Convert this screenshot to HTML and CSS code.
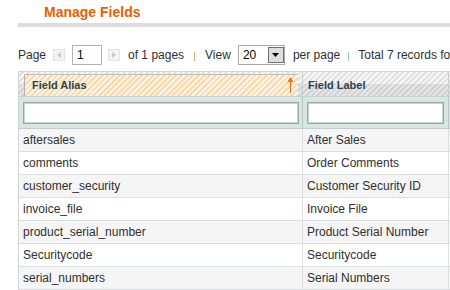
FILE: index.html
```html
<!DOCTYPE html>
<html lang="en">
<head>
    <meta charset="UTF-8">
    <meta name="viewport" content="width=device-width, initial-scale=1.0">
    <title>Manage Fields</title>
    <link rel="stylesheet" href="styles.css">
</head>
<body>
    <div class="content">
        <div class="content-header">
            <h3>Manage Fields</h3>
        </div>
        <div class="pager">
            <span class="txt">Page</span>
            <span class="pg-btn prev">
                <svg width="4" height="6" viewBox="0 0 4 6"><path d="M4 0 L0 3 L4 6 Z" fill="#c9c9c9"/></svg>
            </span>
            <input type="text" class="page-input" value="1">
            <span class="pg-btn next">
                <svg width="4" height="6" viewBox="0 0 4 6"><path d="M0 0 L4 3 L0 6 Z" fill="#c9c9c9"/></svg>
            </span>
            <span class="txt of">of 1 pages</span>
            <span class="sep sep-a"></span>
            <span class="txt view">View</span>
            <div class="select">
                <span class="val">20</span>
                <span class="drop">
                    <svg width="7" height="4" viewBox="0 0 7 4"><path d="M0 0 L7 0 L3.5 4 Z" fill="#000"/></svg>
                </span>
            </div>
            <span class="txt per">per page</span>
            <span class="sep sep-b"></span>
            <span class="txt total">Total 7 records found</span>
        </div>
        <table class="grid">
            <thead>
                <tr class="headings">
                    <th class="col-alias">
                        <span class="sort-asc">
                            <span>Field Alias</span>
                            <svg width="7" height="16" viewBox="0 0 7 16"><path d="M3.5 0 L6.5 5 L4 5 L4 16 L3 16 L3 5 L0.5 5 Z" fill="#f26c1d"/></svg>
                        </span>
                    </th>
                    <th class="col-label"><span class="plain">Field Label</span></th>
                    <th class="col-more"><span class="plain">&nbsp;</span></th>
                </tr>
                <tr class="filter">
                    <th><input type="text" class="filter-input alias-input"></th>
                    <th><input type="text" class="filter-input label-input"></th>
                    <th></th>
                </tr>
            </thead>
            <tbody>
                <tr><td>aftersales</td><td>After Sales</td><td></td></tr>
                <tr><td>comments</td><td>Order Comments</td><td></td></tr>
                <tr><td>customer_security</td><td>Customer Security ID</td><td></td></tr>
                <tr><td>invoice_file</td><td>Invoice File</td><td></td></tr>
                <tr><td>product_serial_number</td><td>Product Serial Number</td><td></td></tr>
                <tr><td>Securitycode</td><td>Securitycode</td><td></td></tr>
                <tr><td>serial_numbers</td><td>Serial Numbers</td><td></td></tr>
            </tbody>
        </table>
    </div>
</body>
</html>
```

FILE: styles.css
```css
body {
    margin: 0;
    padding: 0;
    font-family: "Liberation Sans", Arial, sans-serif;
    font-size: 12px;
    color: #2f2f2f;
    background: #fff;
    overflow: hidden;
}
.content {
    width: 700px;
    padding-left: 18px;
}
.content-header {
    padding: 3px 0 2px 26px;
    border-bottom: 4px solid #dcdcdc;
}
.content-header h3 {
    margin: 0;
    font-size: 14px;
    line-height: 18px;
    font-weight: bold;
    color: #eb5e00;
}
.pager {
    display: flex;
    align-items: center;
    height: 20px;
    margin-top: 18px;
    white-space: nowrap;
}
.pager .txt {
    line-height: 14px;
    padding-bottom: 1px;
}
.pg-btn {
    display: flex;
    align-items: center;
    justify-content: center;
    width: 12px;
    height: 12px;
    box-sizing: border-box;
    background-color: #f3f3f3;
    border: 1px solid #e2e2e2;
}
.prev {
    margin-left: 7px;
}
.page-input {
    margin: 0 0 0 7px;
    width: 30px;
    height: 20px;
    box-sizing: border-box;
    border: 1px solid #b1b1b1;
    padding: 0 0 0 4px;
    font-family: "Liberation Sans", Arial, sans-serif;
    font-size: 12px;
    color: #000;
    outline: none;
}
.next {
    margin-left: 6px;
}
.of {
    margin-left: 8px;
}
.sep {
    display: block;
    width: 1px;
    height: 9px;
    margin-top: 2px;
}
.sep-a {
    margin-left: 10px;
    background-color: #e2a86f;
}
.sep-b {
    margin-left: 8px;
    background-color: #9cc2e4;
}
.view {
    margin-left: 10px;
}
.select {
    display: flex;
    margin-left: 7px;
    width: 47px;
    height: 20px;
    box-sizing: border-box;
    border: 1px solid #a9a9a9;
    background-color: #fff;
}
.select .val {
    flex: 1;
    padding-left: 4px;
    line-height: 18px;
    color: #000;
}
.select .drop {
    display: flex;
    align-items: center;
    justify-content: center;
    width: 16px;
    margin: 1px 0 1px 0;
    box-sizing: border-box;
    border: 1px solid #6f6f6f;
    background-color: #dedede;
}
.per {
    margin-left: 8px;
}
.total {
    margin-left: 9px;
}
.grid {
    margin-top: 6px;
    width: 632px;
    table-layout: fixed;
    border-collapse: separate;
    border-spacing: 0;
    border: 1px solid #ced5d6;
}
.grid th, .grid td {
    box-sizing: border-box;
    padding: 0;
    text-align: left;
    vertical-align: top;
    border-right: 1px solid #dadfe0;
}
.grid th.col-alias {
    width: 284px;
}
.grid th.col-label {
    width: 146px;
}
.headings th {
    height: 25px;
    padding: 2px 4px 0 5px;
    border-bottom: 1px solid #c8d0d0;
    border-right-color: #c9cfd0;
    background:
        linear-gradient(rgba(255, 255, 255, 0) 50%, rgba(0, 0, 0, 0.07) 50%),
        repeating-linear-gradient(135deg, #f6f6f6 0 2px, #e2e2e2 2px 4px);
    font-size: 11px;
    font-weight: bold;
    color: #2d444f;
}
.sort-asc {
    display: flex;
    justify-content: space-between;
    align-items: center;
    height: 22px;
    box-sizing: border-box;
    padding: 0 4px 1px 7px;
    line-height: 20px;
    border-top: 1px solid #bdbdbd;
    border-left: 1px solid #b3b3b3;
    background: repeating-linear-gradient(135deg, #fff3e3 0 2px, #f8d9b0 2px 4px);
}
.sort-asc svg {
    display: block;
}
.plain {
    display: block;
    border-top: 1px solid transparent;
    line-height: 20px;
}
.filter th {
    height: 32px;
    padding: 5px 3px 0 4px;
    background-color: #d9e4e4;
    border-bottom: 1px solid #c3cdcd;
    border-right-color: #b9c4c4;
}
.filter-input {
    display: block;
    height: 22px;
    margin: 0;
    box-sizing: border-box;
    border: 1px solid #a3a3a3;
    box-shadow: inset 0 0 0 1px #cfcfcf;
    background-color: #fff;
    outline: none;
}
.alias-input {
    width: 276px;
}
.label-input {
    width: 137px;
}
.grid td {
    height: 23px;
    padding: 1px 4px 1px 4px;
    line-height: 20px;
    border-bottom: 1px solid #dadfe0;
    white-space: nowrap;
    overflow: hidden;
}
.grid tbody tr:nth-child(odd) td {
    background-color: #f5f5f5;
}
.grid tbody tr:nth-child(even) td {
    background-color: #fff;
}
```
